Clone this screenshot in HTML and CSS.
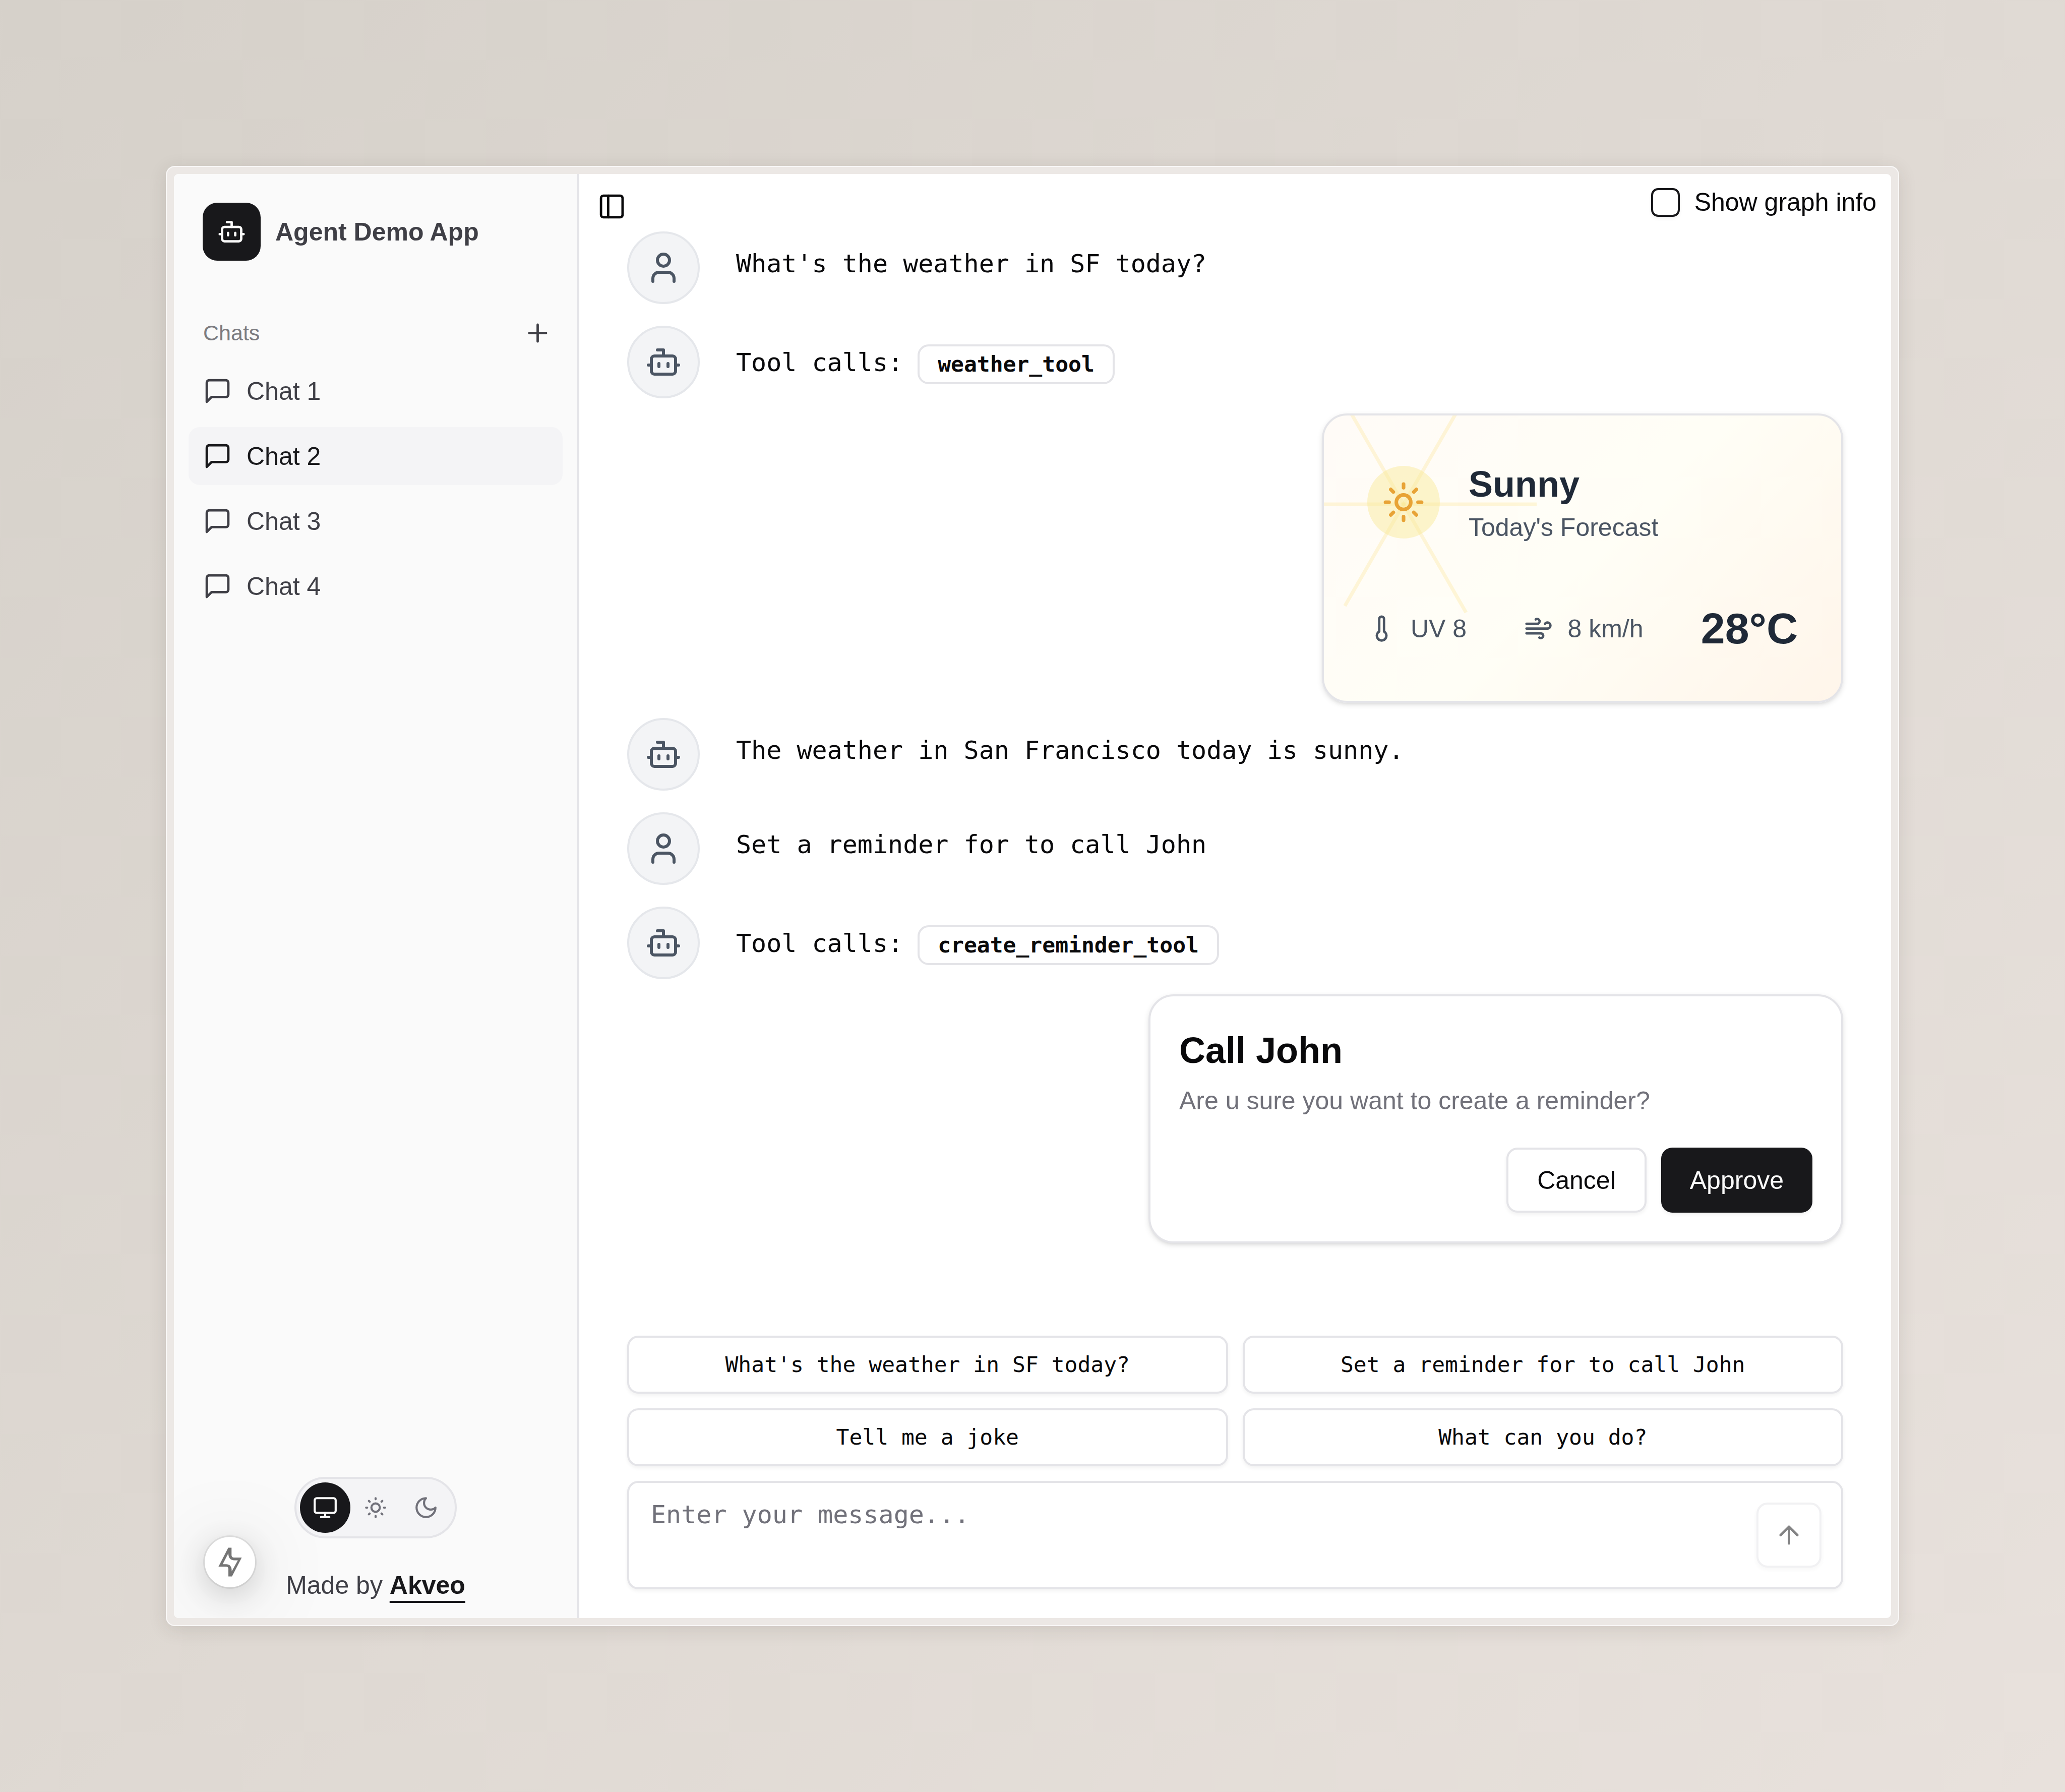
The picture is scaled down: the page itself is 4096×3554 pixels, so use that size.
FILE: index.html
```html
<!DOCTYPE html>
<html lang="en">
<head>
<meta charset="utf-8">
<meta name="viewport" content="width=device-width, initial-scale=1">
<title>Agent Demo App</title>
<link rel="stylesheet" href="styles.css">
</head>
<body>
<svg class="sprite" aria-hidden="true">
  <symbol id="bot" viewBox="0 0 24 24"><path d="M12 8V4H8"/><rect width="16" height="12" x="4" y="8" rx="2"/><path d="M2 14h2M20 14h2M15 13v2M9 13v2"/></symbol>
  <symbol id="user" viewBox="0 0 24 24"><path d="M19 21v-2a4 4 0 0 0-4-4H9a4 4 0 0 0-4 4v2"/><circle cx="12" cy="7" r="4"/></symbol>
  <symbol id="message" viewBox="0 0 24 24"><path d="M21 15a2 2 0 0 1-2 2H7l-4 4V5a2 2 0 0 1 2-2h14a2 2 0 0 1 2 2z"/></symbol>
  <symbol id="plus" viewBox="0 0 24 24"><path d="M5 12h14M12 5v14"/></symbol>
  <symbol id="panel" viewBox="0 0 24 24"><rect width="18" height="18" x="3" y="3" rx="2"/><path d="M9 3v18"/></symbol>
  <symbol id="monitor" viewBox="0 0 24 24"><rect width="20" height="14" x="2" y="3" rx="2"/><path d="M8 21h8M12 17v4"/></symbol>
  <symbol id="sun-medium" viewBox="0 0 24 24"><circle cx="12" cy="12" r="4"/><path d="M12 3v1M12 20v1M3 12h1M20 12h1M18.364 5.636l-.707.707M6.343 17.657l-.707.707M5.636 5.636l.707.707M17.657 17.657l.707.707"/></symbol>
  <symbol id="moon" viewBox="0 0 24 24"><path d="M12 3a6 6 0 0 0 9 9 9 9 0 1 1-9-9Z"/></symbol>
  <symbol id="sun" viewBox="0 0 24 24"><circle cx="12" cy="12" r="4"/><path d="M12 2v2M12 20v2M4.93 4.93l1.41 1.41M17.66 17.66l1.41 1.41M2 12h2M20 12h2M6.34 17.66l-1.41 1.41M19.07 4.93l-1.41 1.41"/></symbol>
  <symbol id="thermometer" viewBox="0 0 24 24"><path d="M14 4v10.54a4 4 0 1 1-4 0V4a2 2 0 0 1 4 0Z"/></symbol>
  <symbol id="wind" viewBox="0 0 24 24"><path d="M12.8 19.6A2 2 0 1 0 14 16H2M17.5 8a2.5 2.5 0 1 1 2 4H2M9.8 4.4A2 2 0 1 1 11 8H2"/></symbol>
  <symbol id="arrow-up" viewBox="0 0 24 24"><path d="m5 12 7-7 7 7M12 19V5"/></symbol>
  <symbol id="bolt" viewBox="0 0 336 336"><path fill-rule="evenodd" d="M157 72h22v50q0 16 16 16h52L182 264h-24v-50q0-16-16-16H92zM120 182h23q34 0 37 38v10L221 156h-25q-34 0-38-38v-10z"/></symbol>
</svg>

<div class="frame">
  <div class="app">
    <aside class="sidebar">
      <header class="brand">
        <span class="brand-logo"><svg class="icon icon-md"><use href="#bot"/></svg></span>
        <span class="brand-name">Agent Demo App</span>
      </header>

      <nav class="chats" aria-label="Chats">
        <div class="chats-head">
          <span class="chats-title">Chats</span>
          <button class="add" type="button" aria-label="New chat"><svg class="icon icon-md"><use href="#plus"/></svg></button>
        </div>
        <ul class="chat-list">
          <li><a class="chat" href="#chat-1"><svg class="icon icon-md"><use href="#message"/></svg>Chat 1</a></li>
          <li><a class="chat chat-active" href="#chat-2" aria-current="page"><svg class="icon icon-md"><use href="#message"/></svg>Chat 2</a></li>
          <li><a class="chat" href="#chat-3"><svg class="icon icon-md"><use href="#message"/></svg>Chat 3</a></li>
          <li><a class="chat" href="#chat-4"><svg class="icon icon-md"><use href="#message"/></svg>Chat 4</a></li>
        </ul>
      </nav>

      <footer class="sidebar-foot">
        <div class="themes" role="radiogroup" aria-label="Theme">
          <label class="theme"><input type="radio" name="theme" aria-label="System" checked><svg class="icon icon-sm"><use href="#monitor"/></svg></label>
          <label class="theme"><input type="radio" name="theme" aria-label="Light"><svg class="icon icon-sm"><use href="#sun-medium"/></svg></label>
          <label class="theme"><input type="radio" name="theme" aria-label="Dark"><svg class="icon icon-sm"><use href="#moon"/></svg></label>
        </div>
        <p class="credit">Made by <a class="credit-link" href="#akveo">Akveo</a></p>
      </footer>
      <button class="devtool" type="button" aria-label="Developer tools"><svg class="devtool-icon"><use href="#bolt"/></svg></button>
    </aside>

    <main class="main">
      <div class="topbar">
        <button class="panel-toggle" type="button" aria-label="Toggle sidebar"><svg class="icon icon-md"><use href="#panel"/></svg></button>
        <label class="graph-info"><input class="checkbox" type="checkbox">Show graph info</label>
      </div>

      <section class="thread" aria-label="Conversation">
        <article class="message">
          <span class="avatar"><svg class="icon icon-lg"><use href="#user"/></svg></span>
          <p class="message-text">What's the weather in SF today?</p>
        </article>
        <article class="message">
          <span class="avatar"><svg class="icon icon-lg"><use href="#bot"/></svg></span>
          <p class="message-text tool-calls">Tool calls: <span class="badge">weather_tool</span></p>
        </article>

        <article class="card weather">
          <svg class="rays" aria-hidden="true">
            <g transform="translate(158 176)">
              <path d="M0 0H264"/>
              <path d="M0 0H248" transform="rotate(60)"/>
              <path d="M0 0H233" transform="rotate(120)"/>
              <path d="M0 0H248" transform="rotate(180)"/>
              <path d="M0 0H248" transform="rotate(240)"/>
              <path d="M0 0H248" transform="rotate(300)"/>
            </g>
          </svg>
          <div class="weather-top">
            <span class="weather-icon"><svg class="icon icon-xl"><use href="#sun"/></svg></span>
            <div>
              <h2 class="weather-title">Sunny</h2>
              <p class="weather-sub">Today's Forecast</p>
            </div>
          </div>
          <div class="weather-stats">
            <span class="stat"><svg class="icon icon-md"><use href="#thermometer"/></svg>UV 8</span>
            <span class="stat"><svg class="icon icon-md"><use href="#wind"/></svg>8 km/h</span>
            <span class="temp">28°C</span>
          </div>
        </article>

        <article class="message">
          <span class="avatar"><svg class="icon icon-lg"><use href="#bot"/></svg></span>
          <p class="message-text">The weather in San Francisco today is sunny.</p>
        </article>
        <article class="message">
          <span class="avatar"><svg class="icon icon-lg"><use href="#user"/></svg></span>
          <p class="message-text">Set a reminder for to call John</p>
        </article>
        <article class="message">
          <span class="avatar"><svg class="icon icon-lg"><use href="#bot"/></svg></span>
          <p class="message-text tool-calls">Tool calls: <span class="badge">create_reminder_tool</span></p>
        </article>

        <article class="card reminder">
          <h2 class="reminder-title">Call John</h2>
          <p class="reminder-text">Are u sure you want to create a reminder?</p>
          <div class="reminder-actions">
            <button class="button button-outline" type="button">Cancel</button>
            <button class="button button-primary" type="button">Approve</button>
          </div>
        </article>
      </section>

      <div class="dock">
        <div class="suggestions">
          <button class="suggestion" type="button">What's the weather in SF today?</button>
          <button class="suggestion" type="button">Set a reminder for to call John</button>
          <button class="suggestion" type="button">Tell me a joke</button>
          <button class="suggestion" type="button">What can you do?</button>
        </div>
        <form class="composer">
          <textarea class="composer-input" placeholder="Enter your message..." aria-label="Message"></textarea>
          <button class="send" type="button" aria-label="Send" disabled><svg class="icon icon-md"><use href="#arrow-up"/></svg></button>
        </form>
      </div>
    </main>
  </div>
</div>
</body>
</html>
```
FILE: styles.css
```css
:root {
  --sans: "Liberation Sans", Arial, sans-serif;
  --mono: "DejaVu Sans Mono", monospace;
  --line: #e4e4e8;
  --ink: #09090b;
  --dark: #18181b;
  --shadow-xs: 0 4px 7px rgba(0, 0, 0, .05);
  --shadow-sm: 0 4px 11px rgba(0, 0, 0, .1), 0 4px 7px -4px rgba(0, 0, 0, .1);
}

*, *::before, *::after { box-sizing: border-box; }

body {
  margin: 0;
  min-height: 100vh;
  padding: 329px;
  display: flex;
  flex-direction: column;
  background: linear-gradient(135deg, #d6d1ca, #e8e1dc);
  font: 50px/72px var(--sans);
  color: var(--ink);
}

h2, p, ul { margin: 0; padding: 0; font-weight: inherit; }
ul { list-style: none; }
button, textarea { font: inherit; color: inherit; }
button { margin: 0; padding: 0; border: 0; background: none; }

.sprite { position: absolute; width: 0; height: 0; }

.icon {
  flex: none;
  display: block;
  fill: none;
  stroke: currentColor;
  stroke-width: 2;
  stroke-linecap: round;
  stroke-linejoin: round;
}
.icon-sm { width: 50px; height: 50px; }
.icon-md { width: 57px; height: 57px; }
.icon-lg { width: 72px; height: 72px; }
.icon-xl { width: 86px; height: 86px; }

/* Window */
.frame {
  flex: 1;
  display: flex;
  padding: 14px;
  border: 2px solid rgba(255, 255, 255, .7);
  border-radius: 18px;
  background: #ece8e5;
  box-shadow: 0 7px 36px rgba(60, 50, 40, .12);
}
.app {
  flex: 1;
  display: flex;
  overflow: hidden;
  border-radius: 9px;
  background: #fff;
}

/* Sidebar */
.sidebar {
  position: relative;
  flex: none;
  width: 804px;
  display: flex;
  flex-direction: column;
  border-right: 4px solid var(--line);
  background: #fafafa;
  color: #3f3f46;
}
.brand {
  display: flex;
  align-items: center;
  gap: 29px;
  padding: 57px 57px 86px;
}
.brand-logo {
  width: 115px;
  height: 115px;
  display: grid;
  place-items: center;
  border-radius: 29px;
  background: var(--dark);
  color: #fafafa;
}
.brand-name { font-weight: 700; }

.chats { flex: 1; padding: 0 29px; }
.chats-head {
  height: 115px;
  display: flex;
  align-items: center;
  justify-content: space-between;
  padding: 0 14px 0 29px;
}
.chats-title { font-size: 43px; line-height: 57px; color: #7b7b80; }
.add { width: 72px; height: 72px; display: grid; place-items: center; }
.chat-list { display: grid; gap: 14px; }
.chat {
  height: 115px;
  display: flex;
  align-items: center;
  gap: 29px;
  padding: 0 29px;
  border-radius: 22px;
  color: inherit;
  text-decoration: none;
}
.chat-active { background: #f4f4f6; color: var(--dark); }

.sidebar-foot {
  display: flex;
  flex-direction: column;
  align-items: center;
  gap: 57px;
  padding: 29px;
}
.themes {
  display: flex;
  padding: 7px;
  border: 4px solid var(--line);
  border-radius: 72px;
  background: #f4f4f6;
  color: #71717a;
}
.theme {
  width: 100px;
  height: 100px;
  display: grid;
  place-items: center;
  border-radius: 50%;
}
.theme:has(input:checked) { background: var(--dark); color: #fafafa; }
.theme input { position: absolute; width: 1px; height: 1px; margin: 0; appearance: none; }
.credit-link {
  color: var(--dark);
  font-weight: 700;
  text-decoration: underline;
  text-decoration-thickness: 4px;
  text-underline-offset: 14px;
  text-decoration-skip-ink: none;
}
.devtool {
  position: absolute;
  left: 61px;
  bottom: 61px;
  width: 100px;
  height: 100px;
  border-radius: 50%;
  background: #fff;
  box-shadow:
    0 0 0 3px rgba(0, 0, 0, .07),
    0 14px 57px rgba(0, 0, 0, .16),
    0 14px 172px rgba(0, 0, 0, .16);
}
.devtool-icon { display: block; width: 100px; height: 100px; fill: #757575; }

/* Main column */
.main { flex: 1; min-width: 0; display: flex; flex-direction: column; }
.topbar {
  display: flex;
  align-items: flex-start;
  justify-content: space-between;
  padding: 14px 29px 0 14px;
}
.panel-toggle { width: 100px; height: 100px; display: grid; place-items: center; }
.graph-info {
  display: flex;
  align-items: center;
  gap: 29px;
  padding-top: 14px;
  line-height: 57px;
}
.checkbox {
  appearance: none;
  width: 57px;
  height: 57px;
  margin: 0;
  border: 4px solid var(--dark);
  border-radius: 14px;
  background: #fff;
  box-shadow: var(--shadow-xs);
}

.thread, .dock {
  width: 100%;
  max-width: 2412px;
  margin: 0 auto;
  display: flex;
  flex-direction: column;
}
.thread { flex: 1; gap: 30px; }
.message { display: flex; align-items: flex-start; gap: 72px; }
.message + .message { margin-top: 13px; }
.avatar {
  flex: none;
  width: 144px;
  height: 144px;
  display: grid;
  place-items: center;
  border: 4px solid #e5e7eb;
  border-radius: 50%;
  background: #f3f4f6;
  color: #4b5563;
}
.message-text { padding-top: 28px; font-family: var(--mono); }
.tool-calls { display: flex; align-items: flex-start; gap: 29px; padding-top: 37px; }
.badge {
  padding: 7px 36px;
  border: 4px solid var(--line);
  border-radius: 22px;
  font-size: 43px;
  line-height: 57px;
  font-weight: 700;
}

.card {
  align-self: flex-end;
  width: 100%;
  border: 4px solid var(--line);
  border-radius: 50px;
  background: #fff;
  box-shadow: var(--shadow-sm);
}

/* Weather card */
.weather {
  position: relative;
  overflow: hidden;
  max-width: 1034px;
  padding: 86px;
  display: flex;
  flex-direction: column;
  gap: 107px;
  background: linear-gradient(135deg, #fffbf7, #fffef6 50%, #fff5ea);
  color: #4b5563;
}
.rays {
  position: absolute;
  inset: 0;
  width: 100%;
  height: 100%;
  fill: none;
  stroke: #f9df72;
  stroke-opacity: .24;
  stroke-width: 7;
}
.weather-top { position: relative; display: flex; align-items: center; gap: 57px; }
.weather-icon {
  width: 144px;
  height: 144px;
  display: grid;
  place-items: center;
  border-radius: 50%;
  background: rgba(248, 233, 146, .44);
  color: #e8a336;
}
.weather-title { font-size: 72px; line-height: 100px; font-weight: 700; color: #1f2937; }
.weather-stats { position: relative; display: flex; align-items: center; justify-content: space-between; }
.stat { display: flex; align-items: center; gap: 29px; }
.temp { font-size: 86px; line-height: 115px; font-weight: 700; color: #1f2937; }

/* Reminder card */
.reminder {
  max-width: 1378px;
  padding: 57px;
  display: flex;
  flex-direction: column;
  gap: 14px;
}
.reminder-title { font-size: 72px; line-height: 100px; font-weight: 700; }
.reminder-text { color: #71717a; }
.reminder-actions { display: flex; justify-content: flex-end; gap: 29px; padding-top: 43px; }
.button { height: 129px; padding: 0 57px; border-radius: 22px; box-shadow: var(--shadow-xs); }
.button-outline { border: 4px solid var(--line); background: #fff; }
.button-primary { background: var(--dark); color: #fafafa; }

/* Suggestions and composer */
.dock { gap: 29px; padding-bottom: 57px; }
.suggestions { display: grid; grid-template-columns: 1fr 1fr; gap: 29px; }
.suggestion {
  height: 115px;
  border: 4px solid var(--line);
  border-radius: 22px;
  background: #fff;
  box-shadow: var(--shadow-xs);
  font: 43px/57px var(--mono);
}
.composer {
  display: flex;
  align-items: center;
  padding-right: 39px;
  border: 4px solid var(--line);
  border-radius: 22px;
  background: #fff;
  box-shadow: var(--shadow-xs);
}
.composer-input {
  flex: 1;
  height: 207px;
  padding: 27px 43px;
  border: 0;
  outline: 0;
  resize: none;
  background: none;
  font-family: var(--mono);
}
.composer-input::placeholder { color: #71717a; opacity: 1; }
.send {
  width: 129px;
  height: 129px;
  display: grid;
  place-items: center;
  border: 4px solid var(--line);
  border-radius: 22px;
  background: #fff;
  box-shadow: var(--shadow-xs);
  color: var(--ink);
  opacity: .5;
}
```
